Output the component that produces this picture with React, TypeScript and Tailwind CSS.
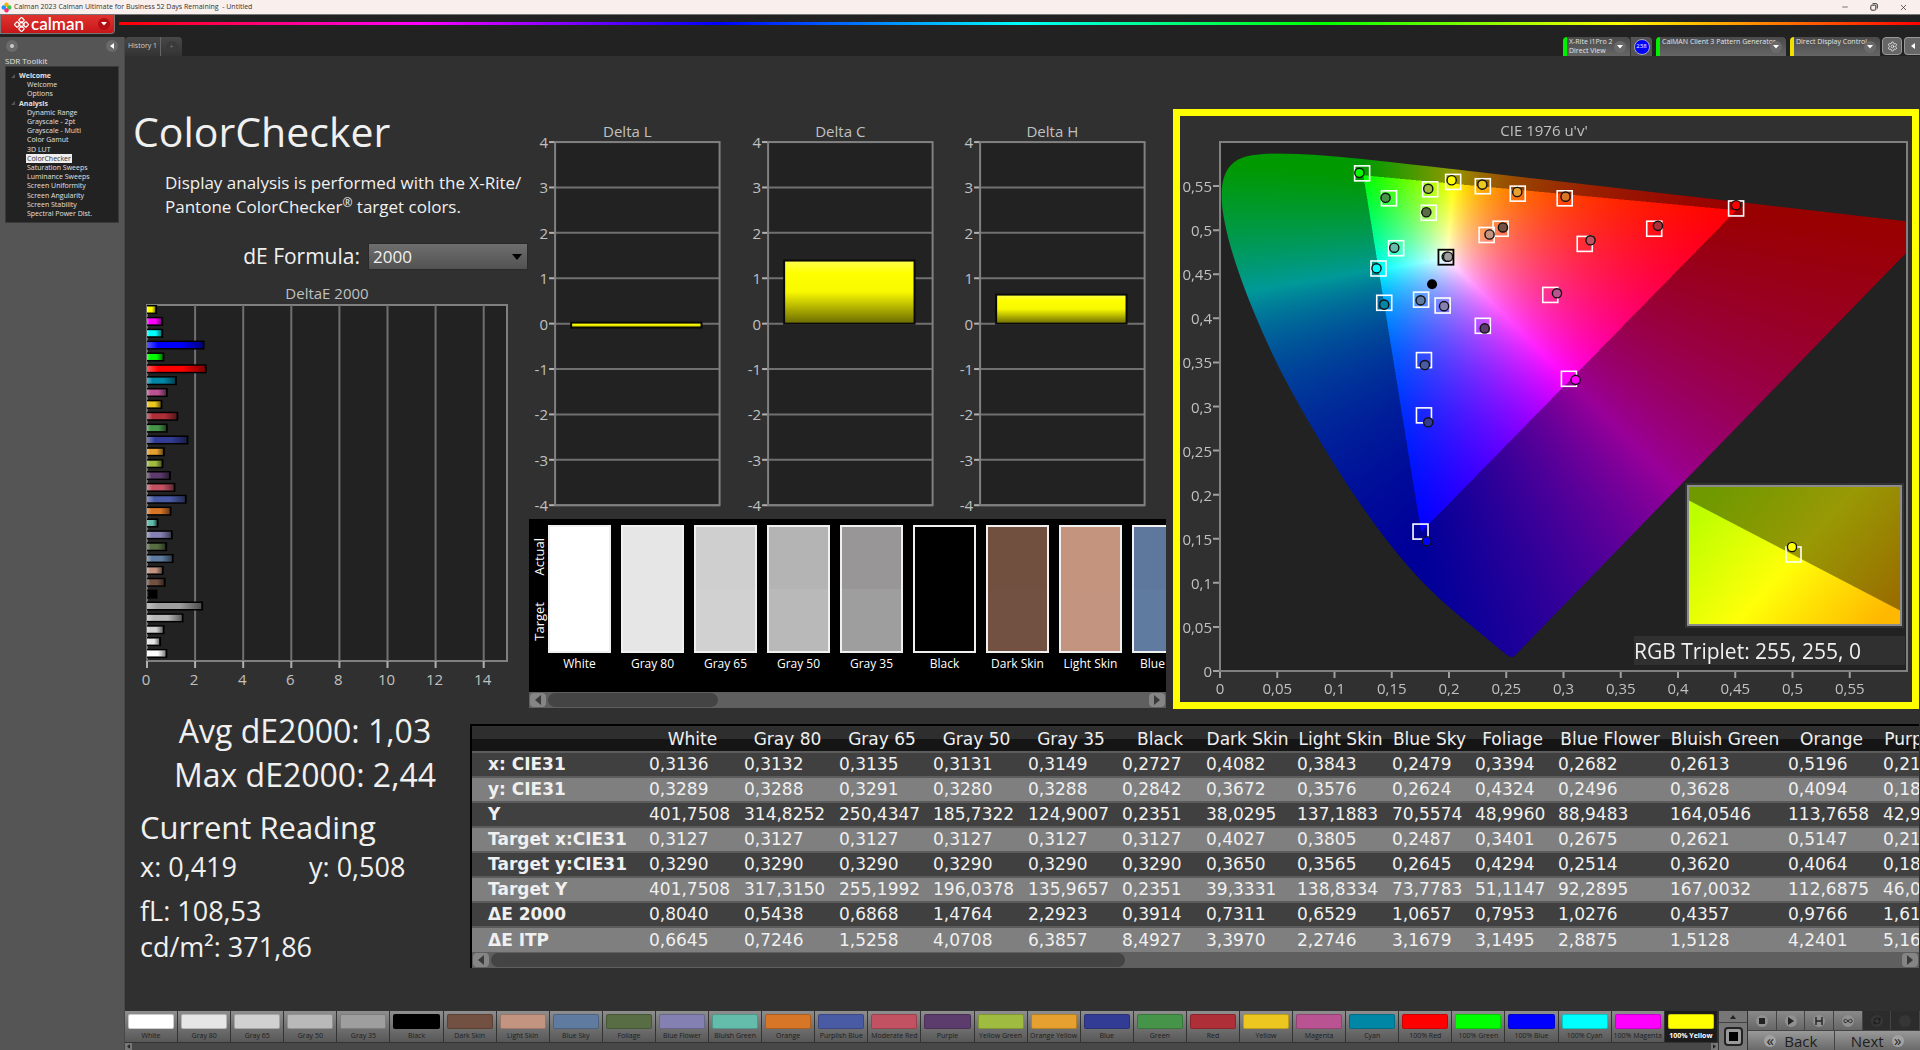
import { useEffect, useRef } from 'react';
import type { ReactNode } from 'react';
import { Infinity as InfinityIcon, Minus, RefreshCw, Settings, X } from 'lucide-react';

type Patch = { name: string; color: string; actual?: string; dE: number };

const PATCHES: Patch[] = [
  { name: 'White', color: '#ffffff', dE: 0.804 },
  { name: 'Gray 80', color: '#e6e6e6', dE: 0.5438 },
  { name: 'Gray 65', color: '#d1d1d1', actual: '#cfcfcf', dE: 0.6868 },
  { name: 'Gray 50', color: '#b9b9b9', actual: '#b4b4b4', dE: 1.4764 },
  { name: 'Gray 35', color: '#9e9e9e', actual: '#999697', dE: 2.2923 },
  { name: 'Black', color: '#000000', dE: 0.3914 },
  { name: 'Dark Skin', color: '#735142', actual: '#725040', dE: 0.7311 },
  { name: 'Light Skin', color: '#c39581', actual: '#c5947f', dE: 0.6529 },
  { name: 'Blue Sky', color: '#5f7b9f', actual: '#5d789c', dE: 1.0657 },
  { name: 'Foliage', color: '#586d43', dE: 0.7953 },
  { name: 'Blue Flower', color: '#8480b1', dE: 1.0276 },
  { name: 'Bluish Green', color: '#64bdaa', dE: 0.4357 },
  { name: 'Orange', color: '#d87628', dE: 0.9766 },
  { name: 'Purplish Blue', color: '#4a5ba5', dE: 1.61 },
  { name: 'Moderate Red', color: '#c25261', dE: 1.14 },
  { name: 'Purple', color: '#5c3c6c', dE: 0.95 },
  { name: 'Yellow Green', color: '#9fbc40', dE: 0.64 },
  { name: 'Orange Yellow', color: '#e5a02f', dE: 0.7 },
  { name: 'Blue', color: '#333c95', dE: 1.68 },
  { name: 'Green', color: '#469449', dE: 0.82 },
  { name: 'Red', color: '#ae2f38', dE: 1.26 },
  { name: 'Yellow', color: '#ebc720', dE: 0.6 },
  { name: 'Magenta', color: '#ba5391', dE: 0.82 },
  { name: 'Cyan', color: '#0087a6', dE: 1.2 },
  { name: '100% Red', color: '#ff0000', dE: 2.44 },
  { name: '100% Green', color: '#00ff00', dE: 0.68 },
  { name: '100% Blue', color: '#0000ff', dE: 2.35 },
  { name: '100% Cyan', color: '#00ffff', dE: 0.63 },
  { name: '100% Magenta', color: '#ff00ff', dE: 0.63 },
  { name: '100% Yellow', color: '#ffff00', dE: 0.38 },
];

const WORKFLOW = [
  { title: 'Welcome', pages: ['Welcome', 'Options'] },
  {
    title: 'Analysis',
    pages: [
      'Dynamic Range',
      'Grayscale - 2pt',
      'Grayscale - Multi',
      'Color Gamut',
      '3D LUT',
      'ColorChecker',
      'Saturation Sweeps',
      'Luminance Sweeps',
      'Screen Uniformity',
      'Screen Angularity',
      'Screen Stability',
      'Spectral Power Dist.',
    ],
  },
];

const COLUMN_WIDTHS = [173, 95, 95, 94, 95, 94, 84, 91, 95, 83, 83, 112, 118, 95, 121];

const READINGS = [
  ['x: CIE31', '0,3136', '0,3132', '0,3135', '0,3131', '0,3149', '0,2727', '0,4082', '0,3843', '0,2479', '0,3394', '0,2682', '0,2613', '0,5196', '0,2117'],
  ['y: CIE31', '0,3289', '0,3288', '0,3291', '0,3280', '0,3288', '0,2842', '0,3672', '0,3576', '0,2624', '0,4324', '0,2496', '0,3628', '0,4094', '0,1846'],
  ['Y', '401,7508', '314,8252', '250,4347', '185,7322', '124,9007', '0,2351', '38,0295', '137,1883', '70,5574', '48,9960', '88,9483', '164,0546', '113,7658', '42,9316'],
  ['Target x:CIE31', '0,3127', '0,3127', '0,3127', '0,3127', '0,3127', '0,3127', '0,4027', '0,3805', '0,2487', '0,3401', '0,2675', '0,2621', '0,5147', '0,2135'],
  ['Target y:CIE31', '0,3290', '0,3290', '0,3290', '0,3290', '0,3290', '0,3290', '0,3650', '0,3565', '0,2645', '0,4294', '0,2514', '0,3620', '0,4064', '0,1883'],
  ['Target Y', '401,7508', '317,3150', '255,1992', '196,0378', '135,9657', '0,2351', '39,3331', '138,8334', '73,7783', '51,1147', '92,2895', '167,0032', '112,6875', '46,0127'],
  ['ΔE 2000', '0,8040', '0,5438', '0,6868', '1,4764', '2,2923', '0,3914', '0,7311', '0,6529', '1,0657', '0,7953', '1,0276', '0,4357', '0,9766', '1,6112'],
  ['ΔE ITP', '0,6645', '0,7246', '1,5258', '4,0708', '6,3857', '8,4927', '3,3970', '2,2746', '3,1679', '3,1495', '2,8875', '1,5128', '4,2401', '5,1643'],
];

// spectral locus, CIE 1931 xy
const LOCUS: [number, number][] = [
  [0.1741, 0.005], [0.1733, 0.0048], [0.1714, 0.0051], [0.1689, 0.0069], [0.1644, 0.0109],
  [0.1566, 0.0177], [0.151, 0.0227], [0.144, 0.0297], [0.1355, 0.0399], [0.1241, 0.0578],
  [0.1096, 0.0868], [0.0913, 0.1327], [0.0687, 0.2007], [0.0454, 0.295], [0.0235, 0.4127],
  [0.0082, 0.5384], [0.0039, 0.6548], [0.0139, 0.7502], [0.0389, 0.812], [0.0743, 0.8338],
  [0.1142, 0.8262], [0.1547, 0.8059], [0.2296, 0.7543], [0.3016, 0.6923], [0.3731, 0.6245],
  [0.4441, 0.5547], [0.5125, 0.4866], [0.5752, 0.4242], [0.627, 0.3725], [0.6658, 0.334],
  [0.6915, 0.3083], [0.719, 0.2809], [0.7347, 0.2653],
];

// target u'v', measured u'v', patch colour
const POINTS: [number, number, number, number, string][] = [
  [0.1237, 0.565, 0.1217, 0.565, '#00ff00'],
  [0.1472, 0.5367, 0.1446, 0.5367, '#469449'],
  [0.1831, 0.5469, 0.1819, 0.5469, '#9fbc40'],
  [0.2032, 0.5553, 0.2023, 0.5566, '#ffff00'],
  [0.2291, 0.5504, 0.2291, 0.5517, '#ebc720'],
  [0.2596, 0.542, 0.2596, 0.5433, '#e5a02f'],
  [0.3006, 0.5367, 0.3018, 0.538, '#d87628'],
  [0.4503, 0.5252, 0.4507, 0.5283, '#ff0000'],
  [0.3788, 0.5022, 0.3825, 0.5049, '#ae2f38'],
  [0.3181, 0.485, 0.3236, 0.4885, '#c25261'],
  [0.2446, 0.5022, 0.2471, 0.5031, '#735142'],
  [0.2324, 0.4951, 0.2354, 0.4951, '#c39581'],
  [0.1819, 0.5203, 0.1802, 0.5203, '#586d43'],
  [0.1534, 0.4801, 0.1522, 0.4801, '#64bdaa'],
  [0.138, 0.4571, 0.1367, 0.4567, '#00ffff'],
  [0.143, 0.4182, 0.1434, 0.4156, '#0087a6'],
  [0.1752, 0.4218, 0.1752, 0.4204, '#5f7b9f'],
  [0.194, 0.4151, 0.1957, 0.4138, '#8480b1'],
  [0.2291, 0.3921, 0.2312, 0.3886, '#5c3c6c'],
  [0.288, 0.4271, 0.2943, 0.4284, '#ba5391'],
  [0.1777, 0.3532, 0.1789, 0.347, '#4a5ba5'],
  [0.1777, 0.2905, 0.1819, 0.2821, '#333c95'],
  [0.3043, 0.332, 0.3106, 0.3302, '#ff00ff'],
  [0.1747, 0.1587, 0.1806, 0.1472, '#0000ff'],
];

const PLOT = { x: 40, y: 26, w: 687, h: 529 };
const uToX = (u: number) => PLOT.x + (u / 0.6) * PLOT.w;
const vToY = (v: number) => PLOT.y + PLOT.h - (v / 0.6) * PLOT.h;
const comma = (n: number) => String(Math.round(n * 100) / 100).replace('.', ',');

// hue at full drive, dimmed outside of Rec.709
function uvToRgb(u: number, v: number) {
  const d = 6 * u - 16 * v + 12;
  const x = (9 * u) / d;
  const y = (4 * v) / d;
  const z = 1 - x - y;
  const lin = [
    3.2406 * x - 1.5372 * y - 0.4986 * z,
    -0.9689 * x + 1.8758 * y + 0.0415 * z,
    0.0557 * x - 0.204 * y + 1.057 * z,
  ];
  const dim = lin.some((c) => c < 0) ? 0.6 : 1;
  const max = Math.max(...lin, 0.0001);
  return lin.map((c) => (255 * dim * Math.max(0, c)) / max);
}

function GamutCanvas() {
  const ref = useRef<HTMLCanvasElement>(null);

  useEffect(() => {
    const ctx = ref.current?.getContext('2d');
    if (!ctx) return;
    const w = PLOT.w * 2;
    const h = PLOT.h * 2;
    const layer = document.createElement('canvas');
    layer.width = w;
    layer.height = h;
    const layerCtx = layer.getContext('2d');
    if (!layerCtx) return;
    const img = layerCtx.createImageData(w, h);
    for (let j = 0; j < h; j++) {
      for (let i = 0; i < w; i++) {
        const [r, g, b] = uvToRgb((i / w) * 0.6, (1 - j / h) * 0.6);
        const k = (j * w + i) * 4;
        img.data[k] = r;
        img.data[k + 1] = g;
        img.data[k + 2] = b;
        img.data[k + 3] = 255;
      }
    }
    layerCtx.putImageData(img, 0, 0);

    ctx.setTransform(2, 0, 0, 2, 0, 0);
    ctx.fillStyle = '#222222';
    ctx.fillRect(PLOT.x, PLOT.y, PLOT.w, PLOT.h);
    ctx.save();
    ctx.beginPath();
    ctx.rect(PLOT.x, PLOT.y, PLOT.w, PLOT.h);
    ctx.clip();
    const pts = LOCUS.map(([x, y]) => {
      const d = -2 * x + 12 * y + 3;
      return [uToX((4 * x) / d), vToY((9 * y) / d)];
    });
    ctx.beginPath();
    ctx.moveTo(pts[0][0], pts[0][1]);
    for (let i = 0; i < pts.length - 1; i++) {
      const p0 = pts[Math.max(0, i - 1)];
      const p1 = pts[i];
      const p2 = pts[i + 1];
      const p3 = pts[Math.min(pts.length - 1, i + 2)];
      ctx.bezierCurveTo(
        p1[0] + (p2[0] - p0[0]) / 6,
        p1[1] + (p2[1] - p0[1]) / 6,
        p2[0] - (p3[0] - p1[0]) / 6,
        p2[1] - (p3[1] - p1[1]) / 6,
        p2[0],
        p2[1],
      );
    }
    ctx.closePath();
    ctx.clip();
    ctx.drawImage(layer, PLOT.x, PLOT.y, PLOT.w, PLOT.h);
    ctx.restore();
  }, []);

  return <canvas ref={ref} width={1464} height={1172} className="absolute inset-0 h-full w-full" aria-hidden />;
}

function CiePanel() {
  const ticks = Array.from({ length: 12 }, (_, i) => i * 0.05);
  return (
    <div className="relative mr-px border-[7px] border-[#ffff00] bg-[#303030]">
      <GamutCanvas />
      <svg viewBox="0 0 732 586" className="relative block w-full text-[15px]" role="img" aria-label="CIE 1976 u'v' chart">
        <defs>
          <linearGradient id="inset" gradientUnits="userSpaceOnUse" x1="540" y1="370" x2="695" y2="508">
            <stop offset="0" stopColor="#bbff00" />
            <stop offset="0.5" stopColor="#ffff08" />
            <stop offset="1" stopColor="#ffb800" />
          </linearGradient>
        </defs>
        <text x="364" y="20" textAnchor="middle" fill="#c0c0c0">CIE 1976 u'v'</text>
        <rect x={PLOT.x} y={PLOT.y} width={PLOT.w} height={PLOT.h} fill="none" stroke="#808080" strokeWidth="2" />
        {ticks.map((t) => (
          <g key={t} fill="#c0c0c0">
            <path d={`M${uToX(t)} 556v6M${PLOT.x - 7} ${vToY(t)}h6`} stroke="#a0a0a0" strokeWidth="2" />
            <text x={uToX(t)} y="578" textAnchor="middle">{comma(t)}</text>
            <text x="32" y={vToY(t) + 6} textAnchor="end">{comma(t)}</text>
          </g>
        ))}
        {POINTS.map(([tu, tv, u, v, color]) => (
          <g key={color}>
            <rect x={uToX(tu) - 7} y={vToY(tv) - 7} width="15" height="15" fill="none" stroke="#fff" strokeWidth="1.6" />
            <circle cx={uToX(u)} cy={vToY(v)} r="4.6" fill={color} stroke="#111" strokeWidth="1.4" />
          </g>
        ))}
        <rect x={uToX(0.1969) - 7} y={vToY(0.4699) - 7} width="15" height="15" fill="none" stroke="#000" strokeWidth="1.8" />
        <circle cx={uToX(0.198)} cy={vToY(0.4699)} r="4.6" fill="#e6e6e6" stroke="#111" strokeWidth="1.4" />
        <circle cx={uToX(0.1992)} cy={vToY(0.4699)} r="4.6" fill="#9e9e9e" stroke="#111" strokeWidth="1.4" />
        <circle cx={uToX(0.1852)} cy={vToY(0.4386)} r="5" fill="#000" />

        <rect x="505" y="367" width="219" height="145" fill="#333" />
        <rect x="508" y="370" width="213" height="139" fill="url(#inset)" />
        <path d="M508 370h213v125L508 384z" fill="#000" fillOpacity="0.4" />
        <rect x="508" y="370" width="213" height="139" fill="none" stroke="#8c8c8c" strokeWidth="2" />
        <rect x="606" y="431" width="15" height="15" fill="none" stroke="#fff" strokeWidth="1.6" />
        <circle cx="612" cy="431" r="4.6" fill="#ffff00" stroke="#111" strokeWidth="1.4" />

        <rect x="454" y="520" width="271" height="29" fill="#303030" />
        <text x="454" y="543" fill="#f0f0f0" className="text-[21px]">RGB Triplet: 255, 255, 0</text>
      </svg>
    </div>
  );
}

function DeltaEChart() {
  const unit = 24.05;
  const bars = [...PATCHES].reverse();
  return (
    <svg viewBox="0 0 403 421" className="block w-full text-[15px]" role="img" aria-label="DeltaE 2000 chart">
      <defs>
        <linearGradient id="gloss-x">
          <stop offset="0" stopColor="#fff" stopOpacity="0.35" />
          <stop offset="0.2" stopColor="#fff" stopOpacity="0" />
          <stop offset="0.6" stopColor="#000" stopOpacity="0" />
          <stop offset="1" stopColor="#000" stopOpacity="0.5" />
        </linearGradient>
      </defs>
      <text x="202" y="29" textAnchor="middle" fill="#c0c0c0">DeltaE 2000</text>
      <rect x="22" y="35" width="360" height="356" fill="#222" stroke="#808080" strokeWidth="2" />
      {[0, 2, 4, 6, 8, 10, 12, 14].map((n) => (
        <g key={n}>
          <path d={`M${22 + n * unit} 35v356`} stroke="#707070" strokeWidth="2" />
          <path d={`M${22 + n * unit} 391v7`} stroke="#b0b0b0" strokeWidth="2" />
          <text x={21 + n * unit} y="415" textAnchor="middle" fill="#c0c0c0">{n}</text>
        </g>
      ))}
      {bars.map((p, i) => {
        const y = 35 + i * 11.86;
        const w = p.dE * unit;
        return (
          <g key={p.name}>
            <rect x="22" y={y} width={w + 1} height="9" fill="#000" />
            <rect x="22" y={y + 1.5} width={w - 1} height="6" fill={p.color} />
            <rect x="22" y={y + 1.5} width={w - 1} height="6" fill="url(#gloss-x)" />
          </g>
        );
      })}
    </svg>
  );
}

function DeltaChart({ title, value }: { title: string; value: number }) {
  const step = 45.25;
  const zero = 24 + 4 * step;
  const top = value > 0 ? zero - value * step : zero - 1;
  const h = Math.max(5, Math.abs(value) * step);
  return (
    <svg viewBox="0 0 212 400" className="block w-full text-[15px]" role="img" aria-label={title}>
      <defs>
        <linearGradient id="gloss-y" x1="0" x2="0" y1="0" y2="1">
          <stop offset="0" stopColor="#ffff50" />
          <stop offset="0.2" stopColor="#ffff00" />
          <stop offset="0.5" stopColor="#f8f800" />
          <stop offset="1" stopColor="#6a6a00" />
        </linearGradient>
      </defs>
      <text x="99" y="19" textAnchor="middle" fill="#c0c0c0">{title}</text>
      <rect x="27" y="24" width="164" height="362" fill="#222" />
      {[4, 3, 2, 1, 0, -1, -2, -3, -4].map((n) => (
        <g key={n}>
          <path d={`M27 ${zero - n * step}h164`} stroke="#707070" strokeWidth="2" />
          <path d={`M21 ${zero - n * step}h6`} stroke="#b0b0b0" strokeWidth="2" />
          <text x="20" y={zero - n * step + 6} textAnchor="end" fill="#c0c0c0">{n}</text>
        </g>
      ))}
      <rect x="27" y="24" width="164" height="362" fill="none" stroke="#808080" strokeWidth="2" />
      <rect x="43" y={top} width="130" height={h} fill="url(#gloss-y)" stroke="#0a0a0a" strokeWidth="2" />
    </svg>
  );
}

function Scrollbar({ thumb, label }: { thumb: string; label: string }) {
  return (
    <div className="flex h-[16px] items-center gap-[2px] bg-[#5f5f5f] px-px">
      <button type="button" aria-label={`Scroll ${label} left`} className="flex h-[14px] w-4 items-center justify-center rounded-sm bg-[#858585]">
        <svg viewBox="0 0 8 10" className="h-[10px] w-2"><path d="M7 0v10L1 5z" fill="#3a3a3a" /></svg>
      </button>
      <div className="h-[14px] flex-1">
        <div className={`h-full rounded-full bg-[#444] ${thumb}`} />
      </div>
      <button type="button" aria-label={`Scroll ${label} right`} className="flex h-[14px] w-4 items-center justify-center rounded-sm bg-[#858585]">
        <svg viewBox="0 0 8 10" className="h-[10px] w-2"><path d="M1 0v10l6-5z" fill="#3a3a3a" /></svg>
      </button>
    </div>
  );
}

function PatchStrip() {
  return (
    <div className="mr-[7px] ml-px overflow-hidden">
      <div className="flex h-[173px] overflow-hidden bg-black pt-[6px] text-white">
        <div className="flex h-32 w-[19px] shrink-0 flex-col items-center justify-around text-[13px] leading-4">
          <span className="rotate-180 [writing-mode:vertical-rl]">Actual</span>
          <span className="rotate-180 [writing-mode:vertical-rl]">Target</span>
        </div>
        <div className="flex gap-[10px]">
          {PATCHES.slice(0, 9).map((p) => (
            <figure key={p.name} className="w-[63px] shrink-0">
              <div className="flex h-32 flex-col border-2 border-[#f0f0f0]">
                <div className="flex-1" style={{ backgroundColor: p.actual ?? p.color }} />
                <div className="flex-1" style={{ backgroundColor: p.color }} />
              </div>
              <figcaption className="text-center text-[12px] leading-[22px] whitespace-nowrap">{p.name}</figcaption>
            </figure>
          ))}
        </div>
      </div>
      <Scrollbar label="patches" thumb="w-[170px]" />
    </div>
  );
}

function ReadingsTable() {
  return (
    <div className="mr-px overflow-hidden border-t-2 border-l-2 border-black font-['DejaVu_Sans',sans-serif]">
      <div className="overflow-hidden">
        <table className="w-full table-fixed border-collapse text-[17px] whitespace-nowrap text-[#f0f0f0]">
          <colgroup>
            {COLUMN_WIDTHS.map((w, i) => (
              <col key={i} style={{ width: w }} />
            ))}
          </colgroup>
          <thead>
            <tr className="h-[26px] bg-linear-to-b from-[#2e2e2e] from-50% to-[#151515] to-50% leading-6">
              <td />
              {PATCHES.slice(0, 14).map((p) => (
                <th key={p.name} scope="col" className="px-0 font-normal">
                  {p.name}
                </th>
              ))}
            </tr>
          </thead>
          <tbody>
            {READINGS.map(([label, ...values]) => (
              <tr key={label} className="h-[25px] border-t-2 border-[#5c5c5c] leading-[23px] odd:bg-[#404040] even:bg-[#7f7f7f]">
                <th scope="row" className="pl-4 text-left font-bold">{label}</th>
                {values.map((v, i) => (
                  <td key={i} className="pl-1">{v}</td>
                ))}
              </tr>
            ))}
          </tbody>
        </table>
      </div>
      <Scrollbar label="readings" thumb="w-[634px]" />
    </div>
  );
}

function RoundCaret() {
  return (
    <span className="flex size-3 shrink-0 items-center justify-center rounded-full bg-[#6a6a6a]">
      <svg viewBox="0 0 6 4" className="h-1 w-[6px]"><path d="M0 0h6L3 3.6z" fill="#fff" /></svg>
    </span>
  );
}

function Device({ lines, className }: { lines: string[]; className: string }) {
  return (
    <button
      type="button"
      className={`flex h-[19px] items-center justify-between rounded-t-sm border-l-4 bg-linear-to-b from-[#4a4a4a] to-[#666] pr-1 pl-[2px] text-left leading-[9px] whitespace-nowrap text-[#e4e4e4] ${className}`}
    >
      <span className="min-w-0 self-start">
        {lines.map((line) => (
          <span key={line} className="block">{line}</span>
        ))}
      </span>
      <RoundCaret />
    </button>
  );
}

function Header() {
  return (
    <>
      <div className="flex h-[15px] items-center border-b border-[#777] bg-[#f9f0ee] pr-3 pl-[1px] text-[7px] text-[#333]">
        <svg viewBox="0 0 12 12" className="mr-[2px] size-[11px]">
          <circle cx="6" cy="3" r="2.4" fill="#f7b500" />
          <circle cx="3" cy="6" r="2.4" fill="#1e90ff" />
          <circle cx="9" cy="6" r="2.4" fill="#35c759" />
          <circle cx="6" cy="9" r="2.4" fill="#ff2d70" />
        </svg>
        <span className="flex-1 whitespace-pre">Calman 2023 Calman Ultimate for Business 52 Days Remaining  - Untitled</span>
        <div className="flex items-center gap-[21px]">
          <button type="button" aria-label="Minimize"><Minus size={8} /></button>
          <button type="button" aria-label="Restore">
            <svg viewBox="0 0 8 8" className="size-2" fill="none" stroke="#333">
              <rect x="0.8" y="2.2" width="5" height="5" rx="1" />
              <path d="M2.5.7h3.6a1.2 1.2 0 0 1 1.2 1.2v3.6" />
            </svg>
          </button>
          <button type="button" aria-label="Close"><X size={9} /></button>
        </div>
      </div>
      <div className="flex h-[22px] items-start bg-[#222]">
        <button
          type="button"
          className="flex h-[19px] w-[115px] items-center rounded-br-sm border border-t-0 border-[#777] bg-linear-to-b from-[#e0332f] to-[#c8141a] pl-[13px] text-white"
        >
          <svg viewBox="0 0 16 16" className="size-[15px]" fill="none" stroke="#fff" strokeWidth="1.3">
            <rect x="5.8" y="1.2" width="4.4" height="4.4" rx="1" transform="rotate(45 8 3.4)" />
            <rect x="5.8" y="10.4" width="4.4" height="4.4" rx="1" transform="rotate(45 8 12.6)" />
            <rect x="1.2" y="5.8" width="4.4" height="4.4" rx="1" transform="rotate(45 3.4 8)" />
            <rect x="10.4" y="5.8" width="4.4" height="4.4" rx="1" transform="rotate(45 12.6 8)" />
            <rect x="5.8" y="5.8" width="4.4" height="4.4" rx="1" transform="rotate(45 8 8)" />
          </svg>
          <span className="ml-[2px] font-['Lato',sans-serif] text-[17px] leading-4 font-semibold">calman</span>
          <span className="mr-1 ml-auto flex size-3 items-center justify-center rounded-full bg-[#b50f14]">
            <svg viewBox="0 0 6 4" className="h-1 w-[6px]"><path d="M0 0h6L3 3.6z" fill="#fff" /></svg>
          </span>
        </button>
        <div className="mt-[7px] ml-1 h-[3px] flex-1 bg-[linear-gradient(to_right,#f00,#f0f,#00f,#0ff,#0f0,#ff0,#f00)]" />
      </div>
    </>
  );
}

function Sidebar() {
  return (
    <aside className="w-[125px] shrink-0 border-r border-[#484848] bg-[#555] px-[5px] text-[7px] text-[#e0e0e0]">
      <div className="flex h-[17px] items-center justify-between px-px">
        <span className="flex size-3 items-center justify-center rounded-full bg-[#6a6a6a]">
          <span className="size-1 rounded-full bg-[#ccc]" />
        </span>
        <button type="button" aria-label="Collapse sidebar" className="flex size-3 items-center justify-center rounded-full bg-[#6a6a6a]">
          <svg viewBox="0 0 4 6" className="h-[6px] w-1"><path d="M4 0v6L0 3z" fill="#fff" /></svg>
        </button>
      </div>
      <h2 className="h-3 text-[8px] leading-[14px]">SDR Toolkit</h2>
      <nav className="flex h-[157px] w-[114px] flex-col border border-[#3a3a3a] bg-[#222] py-1 leading-[9px]">
        {WORKFLOW.map((group) => (
          <ul key={group.title} className="contents">
            <li className="flex flex-1 items-center gap-1 pl-[5px] font-bold">
              <svg viewBox="0 0 4 4" className="size-1"><path d="M4 0v4H0z" fill="#555" /></svg>
              {group.title}
            </li>
            {group.pages.map((page) => (
              <li key={page} className="flex flex-1 items-center pl-5">
                <a href="#" className={page === 'ColorChecker' ? 'bg-[#eee] px-px text-[#333]' : 'px-px'}>{page}</a>
              </li>
            ))}
          </ul>
        ))}
      </nav>
    </aside>
  );
}

function TabBar() {
  return (
    <div className="flex h-[19px] shrink-0 justify-between bg-[#222] text-[7px] text-[#d0d0d0]">
      <div className="flex overflow-hidden rounded-t-sm bg-linear-to-b from-[#484848] to-[#333]">
        <button type="button" className="w-9 border-r border-[#666]">History 1</button>
        <button type="button" aria-label="Add history" className="flex w-[21px] items-center justify-center">
          <span className="flex size-3 items-center justify-center rounded-full bg-[#3a3a3a] leading-none text-[#777]">+</span>
        </button>
      </div>
      <div className="flex">
        <Device lines={['X-Rite i1Pro 2', 'Direct View']} className="w-[67px] border-[#00f000]" />
        <div className="flex w-[22px] items-center justify-center rounded-tr-sm border-l border-[#333] bg-[#555]">
          <span className="flex size-4 items-center justify-center rounded-full border border-[#aab] bg-[#0000ff] text-[6px] text-white">238</span>
        </div>
        <Device lines={['CalMAN Client 3 Pattern Generator']} className="ml-1 w-[130px] border-[#00f000]" />
        <Device lines={['Direct Display Control']} className="ml-1 w-[90px] border-[#f0e000]" />
        <button type="button" aria-label="Settings" className="ml-[2px] flex h-[18px] w-5 items-center justify-center rounded-sm border border-[#999] bg-[#666]">
          <Settings size={11} color="#ddd" />
        </button>
        <button type="button" aria-label="Collapse devices" className="ml-[2px] flex h-[18px] w-4 items-center justify-center rounded-l-sm border border-r-0 border-[#999] bg-[#666]">
          <svg viewBox="0 0 4 6" className="h-[6px] w-1"><path d="M4 0v6L0 3z" fill="#fff" /></svg>
        </button>
      </div>
    </div>
  );
}

function TransportButton({ label, dark, children }: { label: string; dark?: boolean; children?: ReactNode }) {
  return (
    <button
      type="button"
      aria-label={label}
      className={`flex flex-1 items-center justify-center border-r border-[#444] ${dark ? 'bg-[#2c2c2c]' : 'bg-linear-to-b from-[#8a8a8a] to-[#666]'}`}
    >
      <span className={`flex size-3 items-center justify-center rounded-full ${dark ? 'bg-[#363636]' : 'bg-[#909090]'}`}>{children}</span>
    </button>
  );
}

function Footer() {
  return (
    <footer className="flex h-[39px] shrink-0 bg-[#3c3c3c]">
      <div className="min-w-0 flex-1">
        <div className="flex h-[31px]">
          {PATCHES.map((p) => {
            const active = p.name === '100% Yellow';
            return (
              <button
                key={p.name}
                type="button"
                className={`flex min-w-0 flex-1 flex-col border-r border-[#333] px-[3px] pt-[3px] text-[7px] leading-[13px] whitespace-nowrap ${
                  active ? 'bg-[#1c1c1c] font-bold text-white' : 'bg-linear-to-b from-[#8e8e8e] to-[#585858] text-[#1c1c1c]'
                }`}
              >
                <span className="block h-4 w-full rounded-xs border border-black/20" style={{ backgroundColor: p.color }} />
                <span className="flex w-full justify-center">{p.name}</span>
              </button>
            );
          })}
        </div>
        <div className="flex h-2 items-center justify-between border-t border-[#333] bg-[#484848]">
          <button type="button" aria-label="Scroll tiles left" className="flex h-[7px] w-[7px] items-center justify-center bg-[#777]">
            <svg viewBox="0 0 4 6" className="h-[5px] w-[3px]"><path d="M4 0v6L0 3z" fill="#222" /></svg>
          </button>
          <button type="button" aria-label="Scroll tiles right" className="flex h-[7px] w-[7px] items-center justify-center bg-[#777]">
            <svg viewBox="0 0 4 6" className="h-[5px] w-[3px]"><path d="M0 0v6l4-3z" fill="#222" /></svg>
          </button>
        </div>
      </div>
      <div className="flex w-[30px] flex-col border-x border-[#333] bg-[#777]">
        <button type="button" aria-label="Expand" className="flex h-3 items-center justify-center border-b border-[#444]">
          <svg viewBox="0 0 6 4" className="h-1 w-[6px]"><path d="M0 4h6L3 0z" fill="#222" /></svg>
        </button>
        <button type="button" aria-label="Pattern window" className="flex flex-1 items-center justify-center">
          <span className="flex size-[19px] items-center justify-center rounded-sm border-2 border-[#222] bg-[#999]">
            <span className="size-[9px] bg-black" />
          </span>
        </button>
      </div>
      <div className="flex w-[172px] flex-col">
        <div className="flex h-[19px]">
          <TransportButton label="Stop"><span className="size-[6px] bg-[#222]" /></TransportButton>
          <TransportButton label="Play">
            <svg viewBox="0 0 6 8" className="h-2 w-[6px]"><path d="M0 0v8l6-4z" fill="#222" /></svg>
          </TransportButton>
          <TransportButton label="Read series">
            <svg viewBox="0 0 8 8" className="size-2" stroke="#222" strokeWidth="1.4"><path d="M1 0v8M7 0v8M1 4h6" /></svg>
          </TransportButton>
          <TransportButton label="Continuous"><InfinityIcon size={10} color="#222" /></TransportButton>
          <TransportButton label="Refresh" dark><RefreshCw size={8} color="#111" /></TransportButton>
          <TransportButton label="Record" dark />
        </div>
        <div className="flex h-5 text-[15px] leading-5 text-[#1e1e1e]">
          <button type="button" className="flex flex-1 items-center justify-center gap-2 border-t border-r border-[#444] bg-linear-to-b from-[#999] to-[#6a6a6a]">
            <span className="flex size-3 items-center justify-center rounded-full bg-[#a2a2a2] leading-none">«</span>Back
          </button>
          <button type="button" className="flex flex-1 items-center justify-center gap-2 border-t border-[#444] bg-linear-to-b from-[#999] to-[#6a6a6a]">
            Next<span className="flex size-3 items-center justify-center rounded-full bg-[#a2a2a2] leading-none">»</span>
          </button>
        </div>
      </div>
    </footer>
  );
}

export default function App() {
  return (
    <div className="flex min-h-screen flex-col overflow-hidden bg-[#222] font-['Open_Sans',sans-serif]">
      <Header />
      <div className="flex flex-1">
        <Sidebar />
        <div className="flex min-w-0 flex-1 flex-col">
          <TabBar />
          <main className="flex-1 bg-[#303030] text-[#f0f0f0]">
            <div className="grid grid-cols-[minmax(0,403fr)_minmax(0,645fr)_minmax(0,747fr)]">
              <section className="pt-[51px]">
                <h1 className="pl-2 text-[41px] leading-[48px]">ColorChecker</h1>
                <p className="mt-4 pl-10 text-[17px] leading-6 whitespace-nowrap">
                  Display analysis is performed with the X-Rite/
                  <br />
                  Pantone ColorChecker<sup className="text-[12px] leading-none">®</sup> target colors.
                </p>
                <div className="mt-6 flex items-center justify-end gap-2">
                  <label htmlFor="formula" className="text-[21px] leading-[27px]">dE Formula:</label>
                  <div className="relative">
                    <select
                      id="formula"
                      defaultValue="2000"
                      className="block h-[27px] w-40 appearance-none border border-[#2a2a2a] bg-linear-to-b from-[#6e6e6e] to-[#525252] pl-1 text-[17px] leading-[25px]"
                    >
                      <option>2000</option>
                    </select>
                    <svg viewBox="0 0 10 6" className="pointer-events-none absolute top-[11px] right-[6px] h-[6px] w-[10px]">
                      <path d="M0 0h10L5 6z" fill="#000" />
                    </svg>
                  </div>
                </div>
                <DeltaEChart />
              </section>
              <section className="pt-[62px]">
                <div className="mr-[7px] grid grid-cols-3">
                  <DeltaChart title="Delta L" value={-0.1} />
                  <DeltaChart title="Delta C" value={1.39} />
                  <DeltaChart title="Delta H" value={0.64} />
                </div>
                <PatchStrip />
              </section>
              <section className="pt-[53px]">
                <CiePanel />
              </section>
            </div>
            <div className="grid grid-cols-[345px_minmax(0,1fr)]">
              <section className="pl-[15px] text-[27px] leading-9">
                <div className="text-center text-[32px] leading-[44px]">
                  <p>Avg dE2000: 1,03</p>
                  <p>Max dE2000: 2,44</p>
                </div>
                <h2 className="mt-2 text-[31px] leading-[44px]">Current Reading</h2>
                <div className="flex">
                  <p className="w-[169px]">x: 0,419</p>
                  <p>y: 0,508</p>
                </div>
                <p className="mt-2">fL: 108,53</p>
                <p>cd/m²: 371,86</p>
              </section>
              <section className="pt-[15px]">
                <ReadingsTable />
              </section>
            </div>
          </main>
          <Footer />
        </div>
      </div>
    </div>
  );
}
